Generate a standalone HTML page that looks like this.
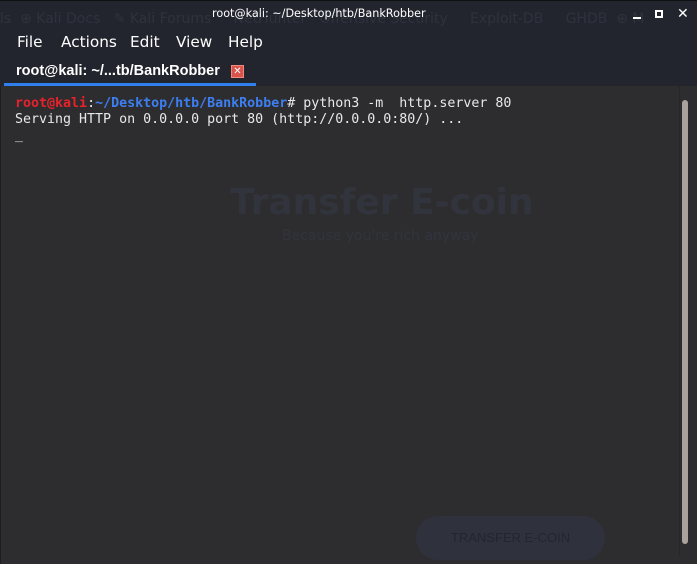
<!DOCTYPE html>
<html><head><meta charset="utf-8"><style>
*{margin:0;padding:0;box-sizing:border-box}
body{width:697px;height:564px;background:#2d2d2f;overflow:hidden;position:relative;font-family:"Liberation Sans","DejaVu Sans",sans-serif}
.chrome{position:absolute;left:0;top:0;width:697px;height:86px;background:#23252e;border-top:1px solid #111;}
.bm{position:absolute;top:10px;font-size:14px;color:#2f323d;white-space:nowrap;font-family:"DejaVu Sans",sans-serif}
.title{position:absolute;top:6px;left:212px;color:#fff;font-size:11.2px;font-family:"DejaVu Sans",sans-serif;white-space:nowrap}
.menu{position:absolute;top:32px;left:17px;color:#fff;font-size:15.3px;font-family:"DejaVu Sans",sans-serif;white-space:nowrap}
.menu span{position:absolute}
.tab{position:absolute;top:62px;left:16px;color:#fff;font-size:14.5px;font-weight:bold;font-family:"Liberation Sans",sans-serif;white-space:nowrap}
.x{position:absolute;top:64px;left:231px;width:13px;height:13px;background:#d9534a;border:1px solid #f08a7f;color:#fff;font-size:10px;line-height:11px;text-align:center;font-weight:bold}
.uline{position:absolute;top:82px;left:4px;width:252px;height:4px;background:#2f80ed}
.term{position:absolute;top:86px;left:0;width:697px;height:478px;background:#2d2d2f;border-left:1px solid #1e1e1e}
pre{position:absolute;left:15px;top:96px;font-family:"DejaVu Sans Mono","Liberation Mono",monospace;font-size:13.3px;line-height:16px;color:#e8e8e8}
.r{color:#e8222c;font-weight:bold}.b{color:#3d7ff0;font-weight:bold}
.ghost{position:absolute;font-family:"DejaVu Sans",sans-serif;color:#32343d;white-space:nowrap}
.sb{position:absolute;left:682px;top:100px;width:6px;height:444px;background:#aaa29d;border-radius:3px}
.track{position:absolute;left:679px;top:86px;width:1px;height:470px;background:#262626}
.ctl{position:absolute;background:#fff}
</style></head><body>
<div class="chrome">
<div class="bm" style="left:0">ls &nbsp;⊕ Kali Docs &nbsp; ✎ Kali Forums &nbsp; &nbsp; NetHunter &nbsp; Offensive Security &nbsp; &nbsp; Exploit-DB &nbsp; &nbsp; GHDB &nbsp;⊕ M</div>
<div class="title">root@kali: ~/Desktop/htb/BankRobber</div>
<div class="ctl" style="left:633px;top:16px;width:8px;height:2px"></div>
<div style="position:absolute;left:655px;top:9px;width:8px;height:8px;border:2px solid #fff"></div>
<div style="position:absolute;left:677px;top:4px;color:#fff;font-size:14px;font-weight:bold">✕</div>
<div class="menu"><span style="left:0">File</span><span style="left:44px">Actions</span><span style="left:113px">Edit</span><span style="left:159px">View</span><span style="left:211px">Help</span></div>
<div class="tab">root@kali: ~/...tb/BankRobber</div>
<div class="x">✕</div>
<div class="uline"></div>
</div>
<div class="term"></div>
<div class="ghost" style="left:230px;top:182px;font-size:36px;font-weight:bold">Transfer E-coin</div>
<div class="ghost" style="left:282px;top:228px;font-size:14px">Because you're rich anyway</div>
<div style="position:absolute;left:416px;top:516px;width:189px;height:44px;border-radius:22px;background:#2f323c;color:#24262d;font-size:13px;text-align:center;line-height:44px">TRANSFER E-COIN</div>
<div class="track"></div>
<div class="sb"></div>
<pre><span class="r">root@kali</span>:<span class="b">~/Desktop/htb/BankRobber</span># python3 -m  http.server 80
Serving HTTP on 0.0.0.0 port 80 (http://0.0.0.0:80/) ...
_</pre>
</body></html>
